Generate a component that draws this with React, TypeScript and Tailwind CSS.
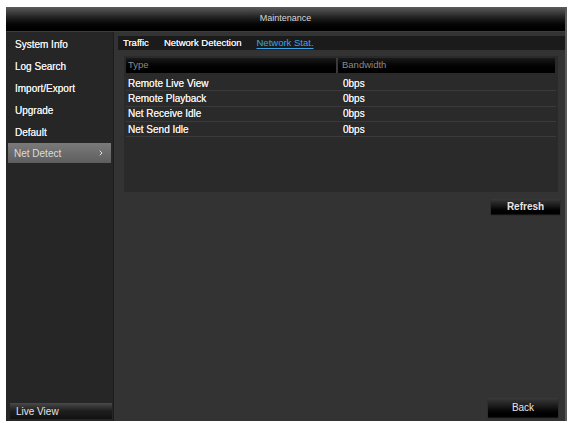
import { ChevronRight } from 'lucide-react';

const menuItems = ['System Info', 'Log Search', 'Import/Export', 'Upgrade', 'Default', 'Net Detect'];

const stats = [
  { type: 'Remote Live View', bandwidth: '0bps' },
  { type: 'Remote Playback', bandwidth: '0bps' },
  { type: 'Net Receive Idle', bandwidth: '0bps' },
  { type: 'Net Send Idle', bandwidth: '0bps' },
];

export default function App() {
  const active = 'Net Detect';

  return (
    <div
      className="w-[570px] h-[423px] bg-white pt-[7px] pl-[6px] pr-[3px] pb-[2px] flex"
      style={{ fontFamily: '"Liberation Sans", Arial, sans-serif' }}
    >
      <div className="flex-1 flex flex-col bg-[#333333] border-r-2 border-[#5a5a5a]">
        {/* Title bar */}
        <div className="h-[25px] flex items-center justify-center bg-gradient-to-b from-[#5c5c5c] via-[#1a1a1a] to-black text-[9px] text-[#d8d8d8] border-b border-[#3c3c3c]">
          Maintenance
        </div>

        <div className="flex-1 flex min-h-0">
          {/* Left menu */}
          <div className="w-[108px] bg-[#262626] border-r border-[#1c1c1c] flex flex-col justify-between pt-[1px] pb-[2px]">
            <div className="flex flex-col">
              {menuItems.map((item) => (
                <div key={item} className="h-[22px] px-[2px] flex items-stretch">
                  <div
                    className={
                      item === active
                        ? 'flex-1 flex items-center justify-between pl-[6px] pr-[6px] mb-[2px] bg-gradient-to-b from-[#7a7a7a] to-[#5e5e5e] text-[#dcdcdc] text-[10px]'
                        : 'flex-1 flex items-center pl-[7px] text-[#ececec] text-[10px] [text-shadow:0_0_0.6px_#fff]'
                    }
                  >
                    <span>{item}</span>
                    {item === active && <ChevronRight size={8} strokeWidth={3} className="text-[#e0e0e0]" />}
                  </div>
                </div>
              ))}
            </div>
            <div className="ml-[4px] mr-[1px] h-[16px] flex items-center pl-[6px] bg-gradient-to-b from-[#4a4a4a] via-[#1e1e1e] to-[#111] text-[10px] text-[#e6e6e6]">
              Live View
            </div>
          </div>

          {/* Main area */}
          <div className="flex-1 flex flex-col pl-[4px] pt-[4px] pb-[4px]">
            <div className="h-[14px] bg-[#1b1b1b] flex items-center gap-[15px] pl-[5px] text-[9.5px] text-[#f0f0f0] [text-shadow:0_0_0.6px_#fff]">
              <span>Traffic</span>
              <span>Network Detection</span>
              <span className="text-[#3aa4e6] underline underline-offset-[2px] decoration-[#3aa4e6] [text-shadow:none]">Network Stat.</span>
            </div>

            {/* Statistics table */}
            <div className="mt-[6px] ml-[6px] mr-[7px] h-[136px] bg-[#2a2a2a] pt-[2px] px-[2px]">
              <div className="h-[15px] flex bg-gradient-to-b from-[#1a1a1a] to-black text-[9.5px] text-[#8a8a8a] mr-[1px]">
                <div className="w-[212px] flex items-center pl-[2px] border-r-2 border-[#3a3a3a]">Type</div>
                <div className="flex-1 flex items-center pl-[4px]">Bandwidth</div>
              </div>
              <div className="mt-[3px]">
                {stats.map((row) => (
                  <div key={row.type} className="h-[15.3px] flex items-center border-b border-[#3a3a3a] text-[10px] text-[#ececec] [text-shadow:0_0_0.6px_#fff]">
                    <div className="w-[214px] pl-[2px]">{row.type}</div>
                    <div className="pl-[3px]">{row.bandwidth}</div>
                  </div>
                ))}
              </div>
            </div>

            <div className="flex justify-end mt-[7px] mr-[5px]">
              <div className="w-[69px] h-[15px] flex items-center justify-center bg-gradient-to-b from-[#3a3a3a] via-[#151515] to-black text-[10px] font-bold text-[#e6e6e6] shadow-[0_1px_1px_rgba(0,0,0,0.6)]">
                Refresh
              </div>
            </div>

            <div className="flex-1" />

            <div className="flex justify-end mr-[7px]">
              <div className="w-[70px] h-[19px] flex items-center justify-center bg-gradient-to-b from-[#3a3a3a] via-[#151515] to-black text-[10px] text-[#e6e6e6] shadow-[0_1px_1px_rgba(0,0,0,0.6)]">
                Back
              </div>
            </div>
          </div>
        </div>
      </div>
    </div>
  );
}
